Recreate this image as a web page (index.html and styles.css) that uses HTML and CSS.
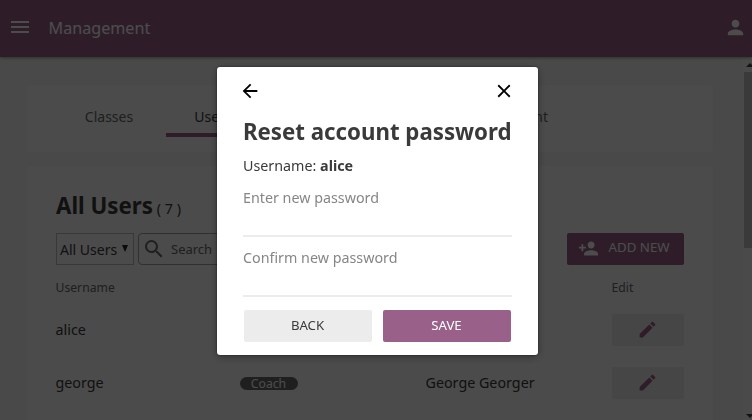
FILE: index.html
```html
<!DOCTYPE html>
<html lang="en">
<head>
<meta charset="utf-8">
<title>Management</title>
<link rel="stylesheet" href="styles.css">
</head>
<body>
<div class="app">
  <header class="topbar">
    <svg class="menu-icon" width="24" height="24" viewBox="0 0 24 24"><path d="M3 18h18v-2H3v2zm0-5h18v-2H3v2zm0-7v2h18V6H3z"/></svg>
    <h1 class="topbar-title">Management</h1>
    <svg class="user-icon" width="23" height="23" viewBox="0 0 24 24"><path d="M12 12c2.21 0 4-1.790 4-4s-1.790-4-4-4-4 1.790-4 4 1.790 4 4 4zm0 2c-2.670 0-8 1.340-8 4v2h16v-2c0-2.660-5.330-4-8-4z"/></svg>
  </header>
  <div class="body">
    <main class="content">
      <nav class="card tabs">
        <a class="tab">Classes</a>
        <a class="tab active">Users</a>
        <a class="tab last">Content</a>
      </nav>
      <section class="card users">
        <div class="heading"><h2>All Users</h2><span class="count">( 7 )</span></div>
        <div class="toolbar">
          <div class="select">All Users<svg class="caret" width="6" height="7" viewBox="0 0 6 7"><path d="M0 0h6L3 7z"/></svg></div>
          <div class="search"><svg width="24" height="24" viewBox="0 0 24 24"><path d="M15.5 14h-.79l-.28-.27A6.471 6.471 0 0 0 16 9.500 6.500 6.500 0 1 0 9.500 16c1.610 0 3.090-.59 4.230-1.570l.27.28v.79l5 4.990L20.490 19l-4.990-5zm-6 0C7.010 14 5 11.990 5 9.500S7.010 5 9.500 5 14 7.010 14 9.500 11.990 14 9.500 14z"/></svg>Search</div>
          <button class="add"><svg width="21" height="21" viewBox="0 0 24 24"><path d="M15 12c2.210 0 4-1.790 4-4s-1.790-4-4-4-4 1.790-4 4 1.790 4 4 4zm-9-2V7H4v3H1v2h3v3h2v-3h3v-2H6zm9 4c-2.670 0-8 1.340-8 4v2h16v-2c0-2.660-5.330-4-8-4z"/></svg>ADD NEW</button>
        </div>
        <div class="row labels"><span>Username</span><span></span><span></span><span>Edit</span></div>
        <div class="row"><span>alice</span><span></span><span></span><span class="edit"><svg width="21" height="21" viewBox="0 0 24 24"><path d="M3 17.250V21h3.750L17.810 9.940l-3.750-3.750L3 17.250zM20.710 7.040a1 1 0 0 0 0-1.410l-2.340-2.340a1 1 0 0 0-1.410 0l-1.830 1.830 3.750 3.750 1.830-1.830z"/></svg></span></div>
        <div class="row"><span>george</span><span><b class="role">Coach</b></span><span>George Georger</span><span class="edit"><svg width="21" height="21" viewBox="0 0 24 24"><path d="M3 17.250V21h3.750L17.810 9.940l-3.750-3.750L3 17.250zM20.710 7.040a1 1 0 0 0 0-1.410l-2.340-2.340a1 1 0 0 0-1.410 0l-1.830 1.830 3.750 3.750 1.830-1.830z"/></svg></span></div>
      </section>
    </main>
    <div class="scrollbar">
      <svg width="8" height="4" viewBox="0 0 8 4"><path d="M0 4h8L4 0z"/></svg>
      <div class="thumb"></div>
      <svg class="down" width="8" height="4" viewBox="0 0 8 4"><path d="M0 0h8L4 4z"/></svg>
    </div>
  </div>
</div>
<div class="overlay">
  <div class="modal">
    <div class="modal-nav">
      <svg width="22" height="22" viewBox="0 0 24 24"><path d="M20 11H7.830l5.590-5.590L12 4l-8 8 8 8 1.410-1.410L7.830 13H20v-2z"/></svg>
      <svg width="22" height="22" viewBox="0 0 24 24"><path d="M19 6.410L17.590 5 12 10.590 6.410 5 5 6.410 10.590 12 5 17.590 6.410 19 12 13.410 17.590 19 19 17.590 13.410 12z"/></svg>
    </div>
    <h2 class="modal-title">Reset account password</h2>
    <p class="username">Username: <b>alice</b></p>
    <div class="field">Enter new password</div>
    <div class="field">Confirm new password</div>
    <div class="actions"><button class="back">BACK</button><button class="save">SAVE</button></div>
  </div>
</div>
</body>
</html>
```
FILE: styles.css
```css
* { box-sizing: border-box; }
body { margin: 0; font: 14.3px/20px "Noto Sans", sans-serif; color: #3a3a3a; overflow: hidden; }
h1, h2, p { margin: 0; }
svg { display: block; flex: none; }
button { border: 0; padding: 0; font: inherit; }
.app { height: 420px; display: flex; flex-direction: column; background: #f5f5f5; overflow: hidden; }
.topbar { height: 57px; flex: none; display: flex; align-items: center; padding: 0 5px 3px 8px; background: #996189; color: #fff; fill: #fff; box-shadow: 0 1px 3px rgba(0,0,0,.35); z-index: 1; }
.topbar-title { margin: 2px 0 0 16.5px; font-size: 16.15px; font-weight: 400; line-height: 24px; }
.user-icon { margin-left: auto; }
.body { flex: 1; display: flex; min-height: 0; }
.content { flex: 1; padding: 28px 29px 0 27px; display: flex; flex-direction: column; gap: 14px; }
.card { background: #fbfbfb; border-radius: 4px; flex: none; }
.tabs { height: 67px; display: flex; align-items: flex-start; gap: 10px; padding: 14px 165px 0 35px; }
.tab { width: 94px; height: 38px; line-height: 36px; font-size: 14px; text-align: center; color: #686868; }
.tab.active { border-bottom: 4px solid #996189; color: #3a3a3a; }
.tab.last { margin-left: auto; text-align: right; }
.users { height: 300px; padding: 25px 29px 0; }
.heading { display: flex; align-items: baseline; height: 42px; gap: 4px; line-height: 30px; }
.heading h2 { font-size: 22.25px; }
.toolbar { display: flex; height: 32px; }
.select { width: 78px; border: 1px solid #bcbcbc; display: flex; align-items: center; padding: 1px 0 0 3px; gap: 5px; font-size: 14px; white-space: nowrap; }
.caret { fill: #222; margin-bottom: 2px; }
.search { width: 240px; margin-left: 4px; border: 1px solid #a0a0a0; border-radius: 4px; display: flex; align-items: center; padding-left: 3px; gap: 5px; font-size: 13px; color: #686868; fill: #686868; }
.add { margin-left: auto; width: 117px; border-radius: 2px; background: #996189; color: #fff; fill: #fff; display: flex; align-items: center; gap: 9.5px; padding: 0 0 5px 11px; font-size: 13.3px; }
.add svg { margin-top: 4px; }
.row { display: grid; grid-template-columns: 184px 186px 186px 72px; height: 53px; align-items: center; margin-left: -.5px; }
.labels { height: 38px; font-size: 12.2px; color: #686868; padding-top: 8px; }
.role { display: block; width: 58px; height: 13px; line-height: 14px; margin-top: 1px; border-radius: 7px; background: #686868; color: #fff; font-size: 12.2px; font-weight: 400; text-align: center; }
.edit { height: 32px; border-radius: 2px; background: #ececec; display: grid; place-items: center; fill: #996189; }
.scrollbar { width: 10px; background: #f8f8f8; padding: 6px 0 2px 2px; display: flex; flex-direction: column; fill: #444; overflow: hidden; }
.scrollbar svg { margin-left: 2px; }
.thumb { height: 176px; margin-top: 5px; background: #c1c1c1; }
.scrollbar .down { margin-top: auto; }
.overlay { position: fixed; inset: 0; z-index: 2; background: rgba(0,0,0,.7); padding: 66.6px 0 0 216.6px; }
.modal { width: 321.8px; height: 288.8px; padding: 13.4px 26.8px 0 26.4px; background: #fff; border-radius: 3px; box-shadow: 0 0 2px rgba(0,0,0,.6), 0 2px 8px rgba(0,0,0,.33); }
.modal-nav { display: flex; justify-content: space-between; height: 36px; margin: 0 -3.5px 0 -4px; padding-top: .5px; }
.modal-title { font-size: 22.25px; line-height: 32px; white-space: nowrap; }
.username { height: 39px; padding-top: 8px; }
.field { height: 50px; padding-top: 1px; margin-bottom: 10px; border-bottom: 2px solid #ececec; color: #868686; }
.actions { display: flex; gap: 10.6px; padding: 2.6px .4px 0 .8px; }
.actions button { flex: 1; height: 32px; padding: 0 1px 2px 0; font-size: 13.2px; border-radius: 2px; }
.back { background: #ececec; color: #3a3a3a; }
.save { background: #996189; color: #fff; }
```
